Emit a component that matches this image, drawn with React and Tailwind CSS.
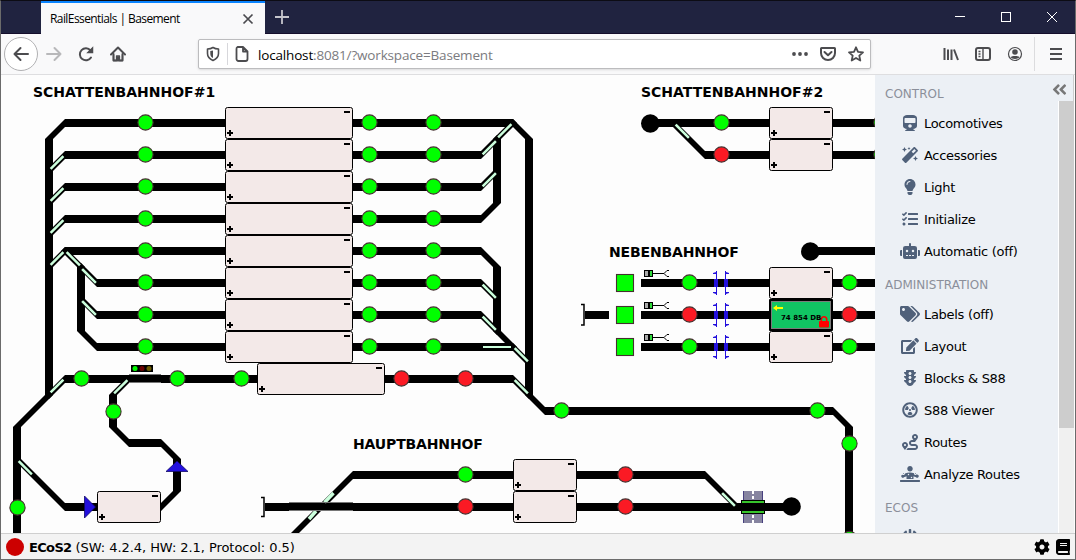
import React from "react";
import {
  FaTrain, FaMagic, FaLightbulb, FaTasks, FaRobot, FaTags, FaEdit, FaTrafficLight,
  FaRadiationAlt, FaRoute, FaDiagnoses, FaPowerOff, FaCog, FaBook, FaAngleDoubleLeft,
} from "react-icons/fa";

/* ---------- track plan data ---------- */

const rows = [123, 155, 187, 219, 251, 283, 315, 347];

const horizontals = [
  ...rows.map((y, i) => [i < 5 ? 65 : 97, 225, y]),
  ...rows.map((y, i) => [353, i === 0 || i === 7 ? 513 : 481, y]),
  [65, 257, 379], [385, 513, 379], [545, 833, 411],
  [129, 161, 443], [65, 97, 507],
  [353, 513, 475], [577, 705, 475], [265, 513, 507], [577, 785, 507],
  [650, 769, 123], [833, 876, 123], [705, 769, 155], [833, 876, 155],
  [810, 876, 251],
  [641, 769, 283], [641, 769, 315], [641, 769, 347],
  [833, 876, 283], [833, 876, 315], [833, 876, 347],
  [585, 609, 315],
];

const verticals = [
  [49, 139, 395], [17, 427, 540], [81, 267, 331], [113, 395, 427], [177, 459, 491],
  [497, 139, 203], [497, 267, 331], [529, 139, 395], [849, 427, 540],
];

const diagonals = [
  [65, 123, 49, 139], [49, 395, 17, 427], [17, 459, 65, 507], [113, 427, 129, 443],
  [161, 443, 177, 459], [177, 491, 161, 507], [81, 331, 97, 347],
  [513, 123, 529, 139], [529, 395, 545, 411], [833, 411, 849, 427],
  [497, 203, 481, 219], [481, 251, 497, 267], [497, 331, 513, 347],
  [353, 475, 289, 539], [705, 475, 737, 507], [673, 123, 705, 155],
  [65, 155, 49, 171], [65, 187, 49, 203], [65, 219, 49, 235], [65, 251, 49, 267],
  [65, 251, 81, 267], [81, 267, 97, 283], [81, 299, 97, 315],
  [65, 379, 49, 395], [129, 379, 113, 395],
  [513, 123, 497, 139], [497, 139, 481, 155], [497, 171, 481, 187],
  [481, 283, 497, 299], [481, 315, 497, 331], [513, 347, 529, 363], [513, 379, 529, 395],
];

const switchBlades = [
  [62.5, 157, 51.5, 168], [62.5, 189, 51.5, 200], [62.5, 221, 51.5, 232], [62.5, 253, 51.5, 264],
  [67.5, 253, 79, 264.5], [83, 270, 95, 282], [83, 302, 95, 314],
  [62.5, 380.5, 51.5, 391.5], [126.5, 381, 115, 392.5],
  [510.5, 125, 499, 136.5], [495, 142, 483.5, 153.5], [495, 174, 483.5, 185.5],
  [483.5, 285.5, 495, 297], [483.5, 317.5, 495, 329], [515.5, 349, 527, 360.5], [515.5, 381, 527, 392.5],
  [19.5, 462, 31, 473.5], [676.5, 125.5, 688, 137], [723, 494, 734, 505],
];

const green = [
  ...rows.flatMap((y) => [[145.5, y - 0.5], [369.5, y - 0.5], [433.5, y - 0.5]]),
  [81.5, 378.5], [177.5, 378.5], [241.5, 378.5], [113.5, 411.5], [17.5, 507.5],
  [561.5, 410.5], [817.5, 410.5], [849.5, 443.5], [849.5, 539],
  [465.5, 474.5], [721.5, 122.5], [881.5, 122.5], [881.5, 154.5],
  [689.5, 282.5], [689.5, 346.5], [849.5, 282.5], [849.5, 346.5],
];

const red = [
  [401.5, 378.5], [465.5, 378.5], [465.5, 506.5], [625.5, 474.5], [625.5, 506.5],
  [721.5, 154.5], [689.5, 314.5], [849.5, 314.5],
];

const blocks = [
  ...rows.map((y) => [225, y - 16, 128]),
  [257, 363, 128], [97, 491, 64], [513, 459, 64], [513, 491, 64],
  [769, 107, 64], [769, 139, 64], [769, 267, 64], [769, 331, 64],
];

/* ---------- track plan ---------- */

function Block({ x, y, w }) {
  return (
    <g>
      <rect x={x + 0.5} y={y + 0.5} width={w - 1} height={31} rx="2" fill="#f3e9e8" stroke="#000" />
      <path d={`M${x + 2} ${y + 25}h6v2h-6zM${x + 4} ${y + 23}h2v6h-2zM${x + w - 9} ${y + 4}h6v2h-6z`} />
    </g>
  );
}

function OccupiedBlock() {
  return (
    <g>
      <rect x="769" y="299" width="64" height="32" rx="1" />
      <rect x="771.5" y="301.5" width="59" height="27" fill="#11c463" stroke="#7b7b7b" />
      <path d="M773 308l4-3v2h6v2h-6v2z" fill="#ffff00" />
      <path d="M821.3 322v-2.500a2.700 2.700 0 0 1 5.400 0v2.500" fill="none" stroke="#f00" strokeWidth="1.6" />
      <rect x="819" y="321" width="10" height="6.500" rx="1" fill="#f00" />
    </g>
  );
}

function Decoupler({ y }) {
  return (
    <g>
      <rect x="644" y={y} width="9" height="7" />
      <rect x="645" y={y + 1} width="3" height="5" fill="#aaa" />
      <rect x="650" y={y + 1} width="2" height="5" fill="#2fdc3c" />
      <path d={`M653 ${y + 3.5}h11M669 ${y + 0.5}h-2l-3 3l3 3h2`} fill="none" stroke="#000" />
    </g>
  );
}

function Bridge({ y }) {
  return (
    <g fill="#2310dd">
      <path d={`M716 ${y - 12}h1v24h-1zM714 ${y - 4}h4v8h-4zM713 ${y - 9}v-1l3 -1v2zM713 ${y + 9}v1l3 1v-2z`} />
      <path d={`M725 ${y - 12}h1v24h-1zM724 ${y - 4}h4v8h-4zM729 ${y - 9}v-1l-3 -1v2zM729 ${y + 9}v1l-3 1v-2z`} />
    </g>
  );
}

function LevelCrossing() {
  return (
    <g>
      <path d="M743 491h20v9h-20zM743 514h20v9h-20z" fill="#8684a0" />
      <path d="M743.5 491v9M762.500 491v9M743.500 514v9M762.500 514v9" stroke="#47407f" />
      <path d="M752 491h2v3h-2zM752 496h2v3h-2zM752 515h2v3h-2zM752 520h2v3h-2z" fill="#fff" />
      <rect x="741.500" y="500.500" width="23" height="13" fill="#37c42c" stroke="#000" />
      <rect x="741" y="503" width="24" height="8" />
    </g>
  );
}

function TrackPlan() {
  return (
    <svg className="block" width="874" height="458" viewBox="1 75 874 458">
      <g stroke="#000" strokeWidth="8">
        {horizontals.map(([a, b, y], i) => <line key={i} x1={a} x2={b} y1={y} y2={y} />)}
        {verticals.map(([x, a, b], i) => <line key={i} x1={x} x2={x} y1={a} y2={b} />)}
      </g>
      <g stroke="#000" strokeWidth="5.66" strokeLinecap="square">
        {diagonals.map(([a, b, c, d], i) => <line key={i} x1={a} y1={b} x2={c} y2={d} />)}
      </g>
      <g stroke="#ccffdd" strokeWidth="2.5" strokeLinecap="square">
        {switchBlades.map(([a, b, c, d], i) => <line key={i} x1={a} y1={b} x2={c} y2={d} />)}
      </g>
      <path d="M483 347h28" stroke="#ccffdd" strokeWidth="2" />
      <path d="M309 519l7-8M324.500 502.500l9-9.500" stroke="#ccffdd" strokeWidth="3.500" />
      <path d="M289 507h64" stroke="#000" strokeWidth="7" />
      <path d="M289 502.500h64M289 510.500h64M129 374.500h32M129 382.500h32" stroke="#777" />

      <g fill="#00ff00" stroke="#45302f" strokeWidth="1.100">
        {green.map(([x, y], i) => <circle key={i} cx={x} cy={y} r="7.600" />)}
        {[283, 315, 347].map((y) => <rect key={y} x="616.500" y={y - 8.5} width="17" height="17" />)}
      </g>
      <g fill="#fb1a24" stroke="#45302f" strokeWidth="1.100">
        {red.map(([x, y], i) => <circle key={i} cx={x} cy={y} r="7.600" />)}
      </g>

      {blocks.map(([x, y, w], i) => <Block key={i} x={x} y={y} w={w} />)}
      <OccupiedBlock />

      <circle cx="650.300" cy="123.500" r="9.300" />
      <circle cx="810.300" cy="251.500" r="9.300" />
      <circle cx="791.500" cy="506.500" r="9.300" />
      <path d="M581 304.500h3v20.500h-3M261 497.500h3v19h-3" fill="none" stroke="#000" strokeWidth="1.500" />

      <rect x="131" y="365" width="22" height="7" />
      <circle cx="135" cy="368.500" r="2.500" fill="#00fa00" />
      <circle cx="142" cy="368.500" r="2.500" fill="#6b0000" />
      <circle cx="149" cy="368.500" r="2.500" fill="#6b5a00" />

      <path d="M84.500 496v22l11-11zM166 471.500h22l-11-10.500z" fill="#2310dd" stroke="#120a66" strokeWidth=".8" />
      {[270, 302, 334].map((y) => <Decoupler key={y} y={y} />)}
      {[283, 315, 347].map((y) => <Bridge key={y} y={y} />)}
      <LevelCrossing />
    </svg>
  );
}

/* ---------- browser chrome ---------- */

function TitleBar() {
  return (
    <div className="flex h-[33px] shrink-0 border-b border-[#140d2b] bg-[#202340] text-white">
      <div className="ml-[40px] flex h-[33px] w-[224px] items-center justify-between border-t-2 border-[#0a84ff] bg-[#f9f9fa] pr-[11px] pl-[9px]">
        <span className="whitespace-nowrap font-['Open_Sans',sans-serif] text-[12px] tracking-[-0.58px] text-black">RailEssentials | Basement</span>
        <svg width="12" height="12" viewBox="0 0 12 12" stroke="#4a4a4f" strokeWidth="1.7"><path d="M1.500 1.500l9 9M10.500 1.500l-9 9" /></svg>
      </div>
      <svg className="mt-[9px] ml-[10px]" width="14" height="14" viewBox="0 0 14 14" stroke="#c5c5cc" strokeWidth="1.800"><path d="M0 7h14M7 0v14" /></svg>
      <div className="ml-auto flex items-start gap-[36px] pt-[11px] pr-[18px]">
        <svg width="10" height="10" viewBox="0 0 10 10" stroke="#fff"><path d="M0 4.500h10" /></svg>
        <svg width="10" height="10" viewBox="0 0 10 10" fill="none" stroke="#fff"><rect x=".5" y=".5" width="9" height="9" /></svg>
        <svg width="10" height="10" viewBox="0 0 10 10" stroke="#fff"><path d="M0 0l10 10M10 0L0 10" /></svg>
      </div>
    </div>
  );
}

function Icon({ className, children }) {
  return (
    <svg className={className} width="16" height="16" viewBox="0 0 16 16" fill="none" stroke="#4c4c4f" strokeWidth="2" strokeLinecap="round" strokeLinejoin="round">
      {children}
    </svg>
  );
}

function Toolbar() {
  return (
    <div className="flex h-[41px] shrink-0 items-center border-b border-[#dedee0] bg-[#f9f9fa]">
      <div className="ml-[3px] flex h-[34px] w-[34px] items-center justify-center rounded-full border border-[#b1b1b3] bg-white">
        <Icon><path d="M15 8H1.500M7.500 2l-6 6l6 6" /></Icon>
      </div>
      <svg className="ml-[8px]" width="16" height="16" viewBox="0 0 16 16" fill="none" stroke="#b8b8ba" strokeWidth="2" strokeLinecap="round" strokeLinejoin="round"><path d="M1 8h13.500M8.500 2l6 6l-6 6" /></svg>
      <Icon className="ml-[16px]"><path d="M13 11.500A6 6 0 1 1 12.500 4.500" /><path d="M14.500 2v4.500H10z" fill="#4c4c4f" strokeWidth="1.500" strokeLinejoin="miter" /></Icon>
      <Icon className="ml-[16px]"><path d="M1 8.500L8 1.500l7 7" /><path d="M3.500 8v6.500h9V8M8 11v3" /><path d="M3.500 9v5.500h3V10h3v4.500h3V9" strokeWidth="1.300" /></Icon>

      <div className="ml-[72px] flex h-[30px] w-[673px] items-center rounded-[2px] border border-[#bcbcbe] bg-white pr-[6px] pl-[6px] shadow-sm">
        <Icon><path d="M8 1.500C6.500 2.500 4.500 3 2.500 3v4.500C2.500 11 4.500 13 8 14.500C11.500 13 13.500 11 13.500 7.500V3C11.500 3 9.500 2.500 8 1.500z" strokeWidth="1.600" /><path d="M8 4.500v7.500C6 11 5.300 9.500 5.300 7.500V5C6.300 5 7.200 4.800 8 4.500z" fill="#4c4c4f" stroke="none" /></Icon>
        <div className="ml-[6px] h-[22px] w-px bg-[#d7d7db]" />
        <Icon className="ml-[6px]"><path d="M3.500 1h5.500l4.500 4.500V13a2 2 0 0 1-2 2h-7a2 2 0 0 1-2-2V3a2 2 0 0 1 1-2zM9 1v4.500h4.500" strokeWidth="1.800" /></Icon>
        <span className="ml-[8px] whitespace-nowrap pt-[2px] font-['Open_Sans',sans-serif] text-[13.500px] leading-5 tracking-[-0.17px] text-[#7b7b80]"><span className="text-black">localhost</span>:8081/?workspace=Basement</span>
        <div className="ml-auto flex items-center gap-[12px]">
          <svg width="16" height="16" viewBox="0 0 16 16" fill="#4c4c4f"><circle cx="2" cy="8" r="1.900" /><circle cx="8" cy="8" r="1.900" /><circle cx="14" cy="8" r="1.900" /></svg>
          <Icon><path d="M1.500 2h13a.5.5 0 0 1 .5.500V7A7 7 0 0 1 1 7V2.500a.5.5 0 0 1 .5-.5z" /><path d="M4.500 6L8 9.200L11.500 6" /></Icon>
          <Icon><path d="M8 1.300l2 4.500l5 .5l-3.700 3.300l1 4.900L8 12l-4.300 2.500l1-4.900L1 6.300l5-.5z" strokeWidth="1.800" /></Icon>
        </div>
      </div>

      <div className="ml-auto flex items-center pr-[12px]">
        <Icon><path d="M1.500 2v12M5 3.500v10.500M8.500 3.500v10.500M11 3.500l4 10.500" strokeLinecap="butt" /></Icon>
        <Icon className="ml-[16px]"><rect x="1" y="2" width="14" height="12" rx="2" /><path d="M8 2v12M3.500 5.500h2M3.500 8h2M3.500 10.500h2" strokeWidth="1.400" strokeLinecap="butt" /></Icon>
        <Icon className="ml-[16px]"><circle cx="8" cy="8" r="6.500" strokeWidth="1.200" /><circle cx="8" cy="6" r="2.800" fill="#4c4c4f" stroke="none" /><path d="M3.500 11C5 9.500 11 9.500 12.500 11C11.500 13.500 4.500 13.500 3.500 11z" fill="#4c4c4f" stroke="none" /></Icon>
        <div className="ml-[11px] h-[34px] w-px bg-[#dcdcde]" />
        <svg className="ml-[14px]" width="14" height="14" viewBox="0 0 14 14" stroke="#4c4c4f" strokeWidth="2"><path d="M1 2h12M1 7h12M1 12h12" /></svg>
      </div>
    </div>
  );
}

/* ---------- sidebar ---------- */

function Heading({ className, children }) {
  return <div className={"flex h-[31px] items-center pl-[10px] text-[12px] text-[#8b8f9a] " + className}>{children}</div>;
}

function Item({ icon: Glyph, children }) {
  return (
    <div className="flex h-8 items-center pl-[25px] text-[13px] tracking-[-0.3px] text-black">
      <Glyph className="relative -top-px mr-1 h-4 w-5 shrink-0 text-[#50617a]" />
      {children && <span className="whitespace-nowrap">{children}</span>}
    </div>
  );
}

function Sidebar() {
  return (
    <div className="relative flex w-[199px] shrink-0 overflow-hidden bg-[#ecf0f5]">
      <div className="w-[183px] pt-px">
        <Heading className="pt-[5px]">CONTROL</Heading>
        <div className="pt-px">
          <Item icon={FaTrain}>Locomotives</Item>
          <Item icon={FaMagic}>Accessories</Item>
          <Item icon={FaLightbulb}>Light</Item>
          <Item icon={FaTasks}>Initialize</Item>
          <Item icon={FaRobot}>Automatic (off)</Item>
        </div>
        <Heading className="pt-[3px]">ADMINISTRATION</Heading>
        <Item icon={FaTags}>Labels (off)</Item>
        <Item icon={FaEdit}>Layout</Item>
        <Item icon={FaTrafficLight}>Blocks &amp; S88</Item>
        <Item icon={FaRadiationAlt}>S88 Viewer</Item>
        <Item icon={FaRoute}>Routes</Item>
        <Item icon={FaDiagnoses}>Analyze Routes</Item>
        <Heading className="pt-[3px]">ECOS</Heading>
        <Item icon={FaPowerOff} />
      </div>
      <div className="w-[16px] border-l border-white bg-[#f0f0f0]">
        <div className="h-[353px] bg-[#cdcdcd]" />
      </div>
      <div className="absolute top-0 right-[1px] flex h-[26px] w-[24px] items-center justify-center bg-[#ecf0f5] pt-[2px] pr-[3px]">
        <FaAngleDoubleLeft className="h-[17px] w-[17px] text-[#777]" />
      </div>
    </div>
  );
}

/* ---------- page ---------- */

export default function App() {
  return (
    <div className="flex h-[560px] w-[1076px] flex-col overflow-hidden border border-[#6b6b6b] border-t-[#0c0c14] bg-[#fdfdfd] font-['DejaVu_Sans',Verdana,sans-serif]">
      <TitleBar />
      <Toolbar />
      <div className="flex h-[458px] shrink-0">
        <div className="relative w-[874px] shrink-0 overflow-hidden bg-[#fdfdfd] text-[14px] leading-4 font-bold whitespace-nowrap text-black">
          <TrackPlan />
          <span className="absolute top-[9px] left-[32px]">SCHATTENBAHNHOF#1</span>
          <span className="absolute top-[9px] left-[640px]">SCHATTENBAHNHOF#2</span>
          <span className="absolute top-[169px] left-[608px] tracking-[-0.15px]">NEBENBAHNHOF</span>
          <span className="absolute top-[361px] left-[352px] tracking-[-0.15px]">HAUPTBAHNHOF</span>
          <span className="absolute top-[238px] left-[780px] text-[7px] leading-[10px]">74 854 DB</span>
        </div>
        <Sidebar />
      </div>
      <div className="flex h-[26px] shrink-0 items-center border-t border-[#cfcfcf] bg-[#f3f3f3] pr-[4px] pl-[5px] text-[13px] text-black">
        <div className="h-[18px] w-[18px] rounded-full bg-[#cc0000]" />
        <span className="ml-[5px] whitespace-nowrap pt-[2px] tracking-[-0.06px]"><b className="tracking-[-0.65px]">ECoS2</b> (SW: 4.2.4, HW: 2.1, Protocol: 0.5)</span>
        <FaCog className="ml-auto h-4 w-4" />
        <FaBook className="ml-[5px] h-4 w-4" />
      </div>
    </div>
  );
}
